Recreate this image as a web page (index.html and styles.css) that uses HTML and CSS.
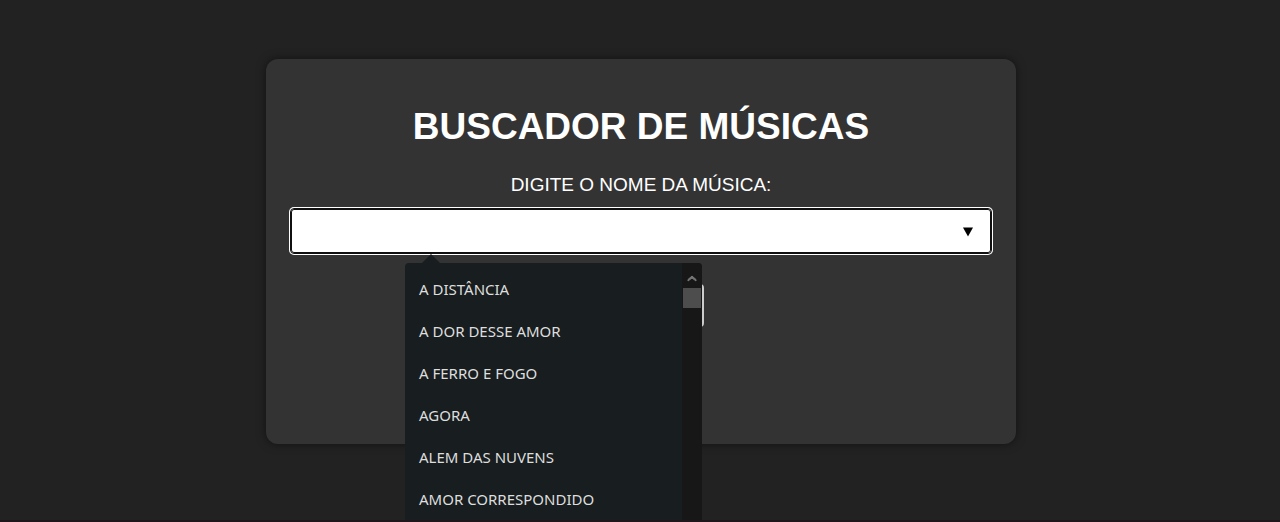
FILE: index.html
```html
<!DOCTYPE html>
<html lang="pt-BR">
<head>
  <meta charset="UTF-8">
  <meta name="viewport" content="width=device-width, initial-scale=1">
  <title>Buscador de Músicas</title>
  <link rel="stylesheet" href="styles.css">
</head>
<body>
  <main class="card">
    <h1 class="title">BUSCADOR DE MÚSICAS</h1>
    <label class="label" for="song">DIGITE O NOME DA MÚSICA:</label>
    <div class="field">
      <input class="field-input" id="song" type="text" role="combobox" aria-expanded="true" aria-controls="songs" autocomplete="off">
      <svg class="field-arrow" viewBox="0 0 10 10" aria-hidden="true"><path d="M0 0.5H10L5 9.5Z"/></svg>
      <div class="popup">
        <ul class="options" id="songs" role="listbox">
          <li class="option" role="option">A DISTÂNCIA</li>
          <li class="option" role="option">A DOR DESSE AMOR</li>
          <li class="option" role="option">A FERRO E FOGO</li>
          <li class="option" role="option">AGORA</li>
          <li class="option" role="option">ALEM DAS NUVENS</li>
          <li class="option" role="option">AMOR CORRESPONDIDO</li>
        </ul>
        <div class="scrollbar" aria-hidden="true">
          <svg class="scroll-up" viewBox="0 0 10 7"><path d="M1 6V4.500L5 1L9 4.500V6L5 3Z"/></svg>
          <div class="scroll-thumb"></div>
        </div>
      </div>
    </div>
    <button class="search" type="button" aria-label="Buscar"></button>
  </main>
</body>
</html>
```
FILE: styles.css
```css
* {
  box-sizing: border-box;
}

body {
  margin: 0;
  min-height: 100vh;
  padding: 59px 16px 0 18px;
  background: #222;
  border-bottom: 2px solid #1f171c;
  color: #fff;
  font-family: Arial, "Liberation Sans", sans-serif;
}

.card {
  display: flex;
  flex-direction: column;
  align-items: center;
  max-width: 750px;
  min-height: 385px;
  margin: 0 auto;
  padding: 46px 25px 24px;
  border-radius: 12px;
  background: #333;
  box-shadow: 0 0 10px rgba(0, 0, 0, 0.5);
}

.title {
  margin: 0 0 24px;
  font-size: 37px;
  line-height: 44px;
}

.label {
  margin-bottom: 12px;
  font-size: 19px;
  line-height: 24px;
}

.field {
  position: relative;
  width: 100%;
}

.field-input {
  display: block;
  width: 100%;
  height: 44px;
  padding: 0 40px 0 12px;
  border: 1px solid #101010;
  border-radius: 3px;
  outline: 1px solid #101010;
  background: #fff;
  box-shadow: 0 0 0 2px #fff;
  color: #000;
  font: inherit;
}

.field-arrow {
  position: absolute;
  top: 18px;
  right: 18px;
  width: 10px;
  height: 10px;
  fill: #000;
}

.popup {
  position: absolute;
  z-index: 1;
  top: 54px;
  left: 114px;
  display: flex;
  width: 297px;
  height: 257px;
  border-radius: 4px 4px 0 0;
  background: #181d1f;
}

.popup::before {
  content: "";
  position: absolute;
  top: -9px;
  left: 17px;
  border: 9px solid transparent;
  border-top: 0;
  border-bottom-color: #181d1f;
}

.options {
  flex: 1;
  margin: 0;
  padding: 5px 0 0;
  list-style: none;
}

.option {
  padding: 0 14px;
  color: #dedede;
  font-family: "Segoe UI", "Noto Sans", sans-serif;
  font-size: 15px;
  line-height: 42px;
}

.scrollbar {
  display: flex;
  flex-direction: column;
  align-items: center;
  width: 20px;
  padding: 12px 1px 0;
  border-radius: 0 4px 0 0;
  background: #171717;
}

.scroll-up {
  width: 10px;
  height: 7px;
  fill: #777;
  stroke: #777;
  stroke-width: 1;
}

.scroll-thumb {
  width: 100%;
  height: 20px;
  margin-top: 6px;
  background: #4d4d4d;
}

.search {
  width: 126px;
  height: 43px;
  margin-top: 31px;
  border: 2px solid #ccc;
  border-radius: 4px;
  background: #333;
}
```
